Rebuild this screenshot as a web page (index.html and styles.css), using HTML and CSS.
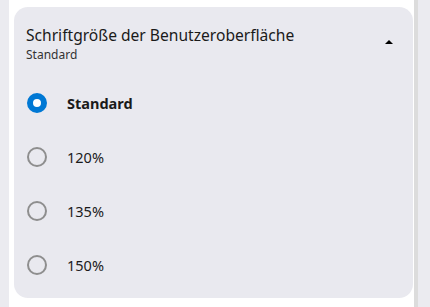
FILE: index.html
```html
<!DOCTYPE html>
<html lang="de">
<head>
    <meta charset="UTF-8">
    <title>Schriftgröße</title>
    <link rel="stylesheet" href="styles.css">
</head>
<body>
    <div class="seite">
        <div class="rand-links"></div>
        <main class="inhalt">
            <section class="karte">
                <div class="kopf">
                    <div class="kopf-text">
                        <div class="titel">Schriftgröße der Benutzeroberfläche</div>
                        <div class="untertitel">Standard</div>
                    </div>
                    <span class="pfeil"></span>
                </div>
                <div class="optionen">
                    <label class="option aktiv"><span class="radio"></span><span class="text">Standard</span></label>
                    <label class="option"><span class="radio"></span><span class="text">120%</span></label>
                    <label class="option"><span class="radio"></span><span class="text">135%</span></label>
                    <label class="option"><span class="radio"></span><span class="text">150%</span></label>
                </div>
            </section>
        </main>
        <div class="scrollbar"></div>
        <div class="rand-rechts"></div>
    </div>
</body>
</html>
```

FILE: styles.css
```css
html, body {
    margin: 0;
    padding: 0;
    height: 100%;
    background-color: #fff;
    font-family: "Noto Sans", "Open Sans", sans-serif;
    color: #1a1a1a;
}

.seite {
    display: flex;
    height: 307px;
}

.rand-links {
    width: 9px;
    background-color: #ebebf0;
}

.inhalt {
    width: 399px;
    padding: 7px 0 0 5px;
}

.karte {
    background-color: #e9e9ef;
    border-radius: 14px;
    height: 291px;
    box-sizing: border-box;
    padding: 17px 0 0 12px;
}

.kopf {
    display: flex;
    align-items: center;
    padding-right: 20px;
}

.kopf-text {
    flex: 1;
}

.titel {
    font-size: 15.6px;
    line-height: 22px;
}

.untertitel {
    font-size: 12px;
    line-height: 17px;
    color: #333;
}

/* kleines Dreieck */
.pfeil {
    width: 0;
    height: 0;
    border-left: 4px solid transparent;
    border-right: 4px solid transparent;
    border-bottom: 4px solid #000;
    margin-bottom: 4px;
}

.optionen {
    margin-top: 13px;
}

.option {
    display: flex;
    align-items: center;
    height: 54px;
}

.radio {
    width: 20px;
    height: 20px;
    box-sizing: border-box;
    border-radius: 50%;
    border: 2px solid #8e8e8e;
    margin: 0 20px 0 1px;
    background-color: transparent;
}

.aktiv .radio {
    border: 6px solid #0078d4;
    background-color: #fff;
}

.text {
    font-size: 14.5px;
}

.aktiv .text {
    font-weight: bold;
}

.scrollbar {
    width: 4px;
    background-color: #dcdcdc;
    margin-left: 1px;
}

.rand-rechts {
    flex: 1;
    background-color: #ebebf0;
}
```
